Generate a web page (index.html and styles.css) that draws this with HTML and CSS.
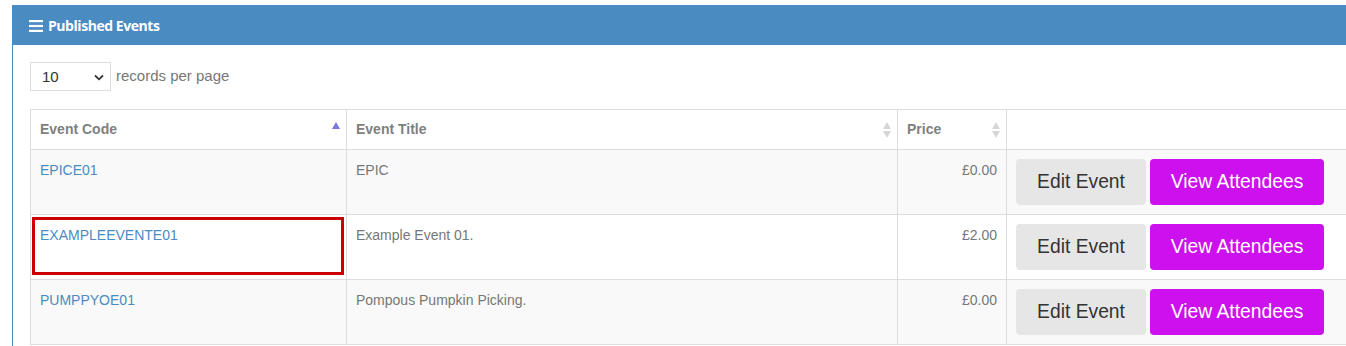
FILE: index.html
```html
<!DOCTYPE html>
<html>
<head>
<meta charset="utf-8">
<link rel="stylesheet" href="styles.css">
</head>
<body>
<div class="panel">
  <div class="panel-heading">
    <svg class="menu-icon" width="14" height="12" viewBox="0 0 14 12"><rect x="0" y="0" width="14" height="2.2" fill="#fff"/><rect x="0" y="4.9" width="14" height="2.2" fill="#fff"/><rect x="0" y="9.8" width="14" height="2.2" fill="#fff"/></svg>
    <span class="panel-title">Published Events</span>
  </div>
  <div class="panel-body">
    <div class="length">
      <div class="select"><span>10</span><svg width="10" height="7" viewBox="0 0 10 7"><path d="M1 1.5 L5 5.3 L9 1.5" fill="none" stroke="#333" stroke-width="1.8"/></svg></div>
      <span class="length-label">records per page</span>
    </div>
    <table class="grid">
      <thead>
        <tr>
          <th class="c-code">Event Code<span class="sort asc"></span></th>
          <th class="c-title">Event Title<span class="sort both"></span></th>
          <th class="c-price">Price<span class="sort both"></span></th>
          <th class="c-act"></th>
        </tr>
      </thead>
      <tbody>
        <tr class="odd">
          <td><a class="link">EPICE01</a></td>
          <td>EPIC</td>
          <td class="num">£0.00</td>
          <td class="act"><span class="btn btn-edit">Edit Event</span><span class="btn btn-view">View Attendees</span></td>
        </tr>
        <tr class="even">
          <td class="marked"><a class="link">EXAMPLEEVENTE01</a><span class="highlight"></span></td>
          <td>Example Event 01.</td>
          <td class="num">£2.00</td>
          <td class="act"><span class="btn btn-edit">Edit Event</span><span class="btn btn-view">View Attendees</span></td>
        </tr>
        <tr class="odd">
          <td><a class="link">PUMPPYOE01</a></td>
          <td>Pompous Pumpkin Picking.</td>
          <td class="num">£0.00</td>
          <td class="act"><span class="btn btn-edit">Edit Event</span><span class="btn btn-view">View Attendees</span></td>
        </tr>
      </tbody>
    </table>
  </div>
</div>
</body>
</html>
```
FILE: styles.css
```css
html, body {
  margin: 0;
  padding: 0;
  background: #fff;
  overflow: hidden;
}
body {
  font-family: "Liberation Sans", Arial, sans-serif;
  font-size: 14px;
  color: #777;
  padding: 5px 0 0 12px;
  height: 341px;
}
.panel {
  width: 1333px;
  height: 341px;
  border-left: 1px solid #4a8bc2;
  overflow: hidden;
}
.panel-heading {
  background: #4a8bc2;
  height: 40px;
  display: flex;
  align-items: center;
  padding-left: 16px;
  color: #fff;
}
.menu-icon {
  margin-right: 5px;
  margin-top: 1px;
}
.panel-title {
  font-family: "Open Sans", sans-serif;
  font-weight: 700;
  font-size: 14px;
  letter-spacing: -0.45px;
}
.panel-body {
  padding: 17px 0 0 17px;
}
.length {
  display: flex;
  align-items: center;
  height: 29px;
}
.select {
  height: 27px;
  border: 1px solid #ddd;
  display: flex;
  align-items: center;
  justify-content: space-between;
  padding: 0 6px 0 11px;
  box-sizing: content-box;
  width: 62px;
  color: #333;
  font-size: 15px;
}
.select svg { margin-top: 1px; }
.length-label {
  margin-left: 5px;
  font-size: 15px;
  color: #777;
  margin-top: -2px;
}
.grid {
  margin-top: 18px;
  border-collapse: collapse;
  table-layout: fixed;
  width: 1400px;
}
.grid th, .grid td {
  border: 1px solid #ddd;
  text-align: left;
  vertical-align: top;
  line-height: 20px;
  padding: 10px 9px 8px 9px;
}
.grid th {
  position: relative;
  font-weight: 700;
  color: #7f7f7f;
  padding: 9px 9px 10px 9px;
}
.c-code { width: 297px; }
.c-title { width: 532px; }
.c-price { width: 90px; }
.sort {
  position: absolute;
  right: 6px;
  top: 12px;
  width: 8px;
  height: 16px;
}
.sort.asc::before {
  content: "";
  position: absolute;
  left: 0;
  top: 0;
  border-left: 4.5px solid transparent;
  border-right: 4.5px solid transparent;
  border-bottom: 7px solid #7676dd;
}
.sort.both::before, .sort.both::after {
  content: "";
  position: absolute;
  left: 0;
  border-left: 4.5px solid transparent;
  border-right: 4.5px solid transparent;
}
.sort.both::before {
  top: 0;
  border-bottom: 7px solid #d6d6d6;
}
.sort.both::after {
  top: 9px;
  border-top: 7px solid #d6d6d6;
}
tr.odd td { background: #f9f9f9; }
tr.even td { background: #fff; }
.link { color: #4a8bc2; text-decoration: none; }
.num { text-align: right !important; }
.grid td.act {
  padding: 9px;
  white-space: nowrap;
}
.btn {
  display: inline-block;
  height: 46px;
  line-height: 46px;
  border-radius: 4px;
  font-size: 19.3px;
  vertical-align: top;
  text-align: center;
}
.btn-edit {
  background: #e6e6e6;
  color: #333;
  width: 130px;
}
.btn-view {
  background: #cc11ee;
  color: #fff;
  margin-left: 4px;
  width: 174px;
}
.marked { position: relative; }
.highlight {
  position: absolute;
  left: 1px;
  top: 2px;
  right: 2px;
  bottom: 4px;
  border: 3px solid #cc0000;
}
```
